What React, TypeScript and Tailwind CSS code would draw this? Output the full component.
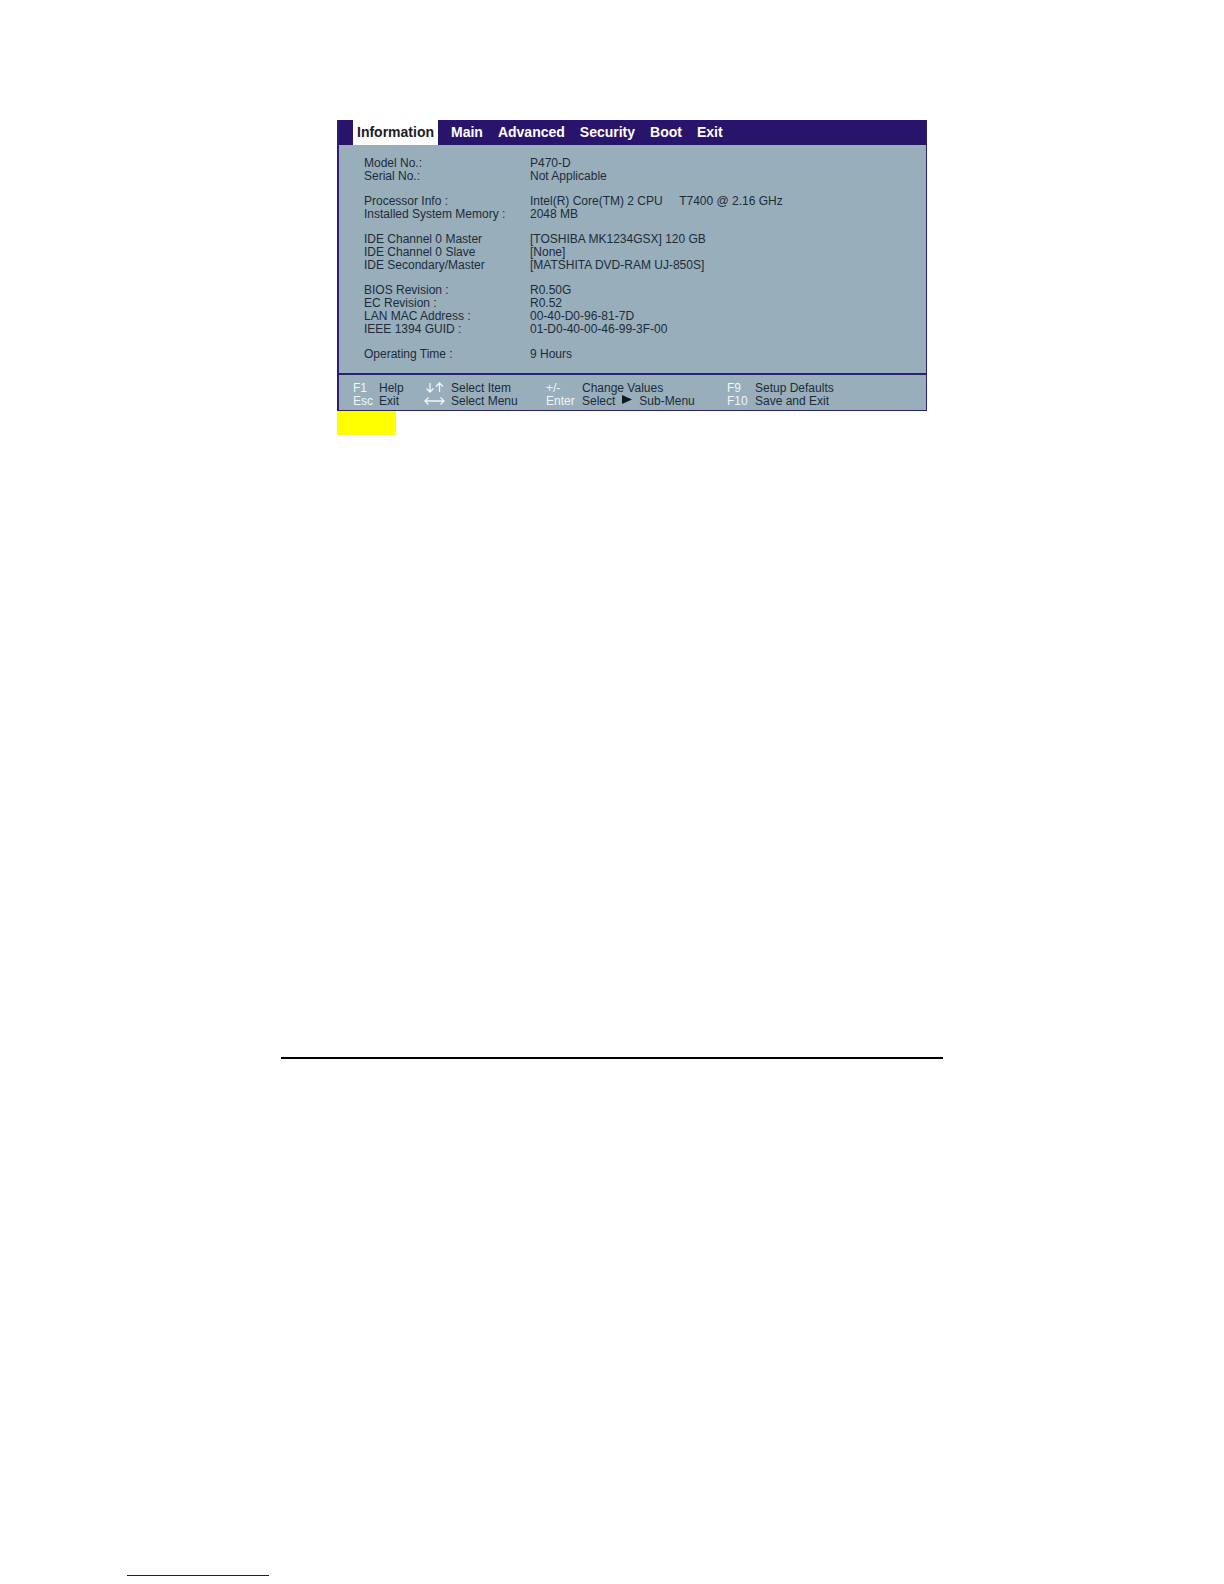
const tabs = ["Main", "Advanced", "Security", "Boot", "Exit"]

const groups = [
    [
        ["Model No.:", "P470-D"],
        ["Serial No.:", "Not Applicable"],
    ],
    [
        ["Processor Info :", "Intel(R) Core(TM) 2 CPU     T7400 @ 2.16 GHz"],
        ["Installed System Memory :", "2048 MB"],
    ],
    [
        ["IDE Channel 0 Master", "[TOSHIBA MK1234GSX] 120 GB"],
        ["IDE Channel 0 Slave", "[None]"],
        ["IDE Secondary/Master", "[MATSHITA DVD-RAM UJ-850S]"],
    ],
    [
        ["BIOS Revision :", "R0.50G"],
        ["EC Revision :", "R0.52"],
        ["LAN MAC Address :", "00-40-D0-96-81-7D"],
        ["IEEE 1394 GUID :", "01-D0-40-00-46-99-3F-00"],
    ],
    [["Operating Time :", "9 Hours"]],
]

function UpDownIcon() {
    return (
        <svg width="21" height="13" viewBox="0 0 21 13" fill="none" stroke="currentColor" strokeWidth="1.3">
            <path d="M6 1v9M2.500 6.500 6 10l3.500-3.500M15.500 10V1M12 4.500 15.500 1 19 4.500" />
        </svg>
    )
}

function LeftRightIcon() {
    return (
        <svg width="21" height="13" viewBox="0 0 21 13" fill="none" stroke="currentColor" strokeWidth="1.3">
            <path d="M1 6h19M4.500 2.500 1 6l3.500 3.500M16.500 2.500 20 6l-3.500 3.500" />
        </svg>
    )
}

function Tabs() {
    return (
        <nav className="flex h-[25px] items-stretch bg-[#29146b] pl-[14px] text-sm font-bold text-white">
            <button className="bg-white px-1 pb-0.5 text-[#1c1c24]">Information</button>
            <div className="flex gap-[15px] pl-[13px]">
                {tabs.map((tab) => (
                    <button key={tab} className="pb-0.5">{tab}</button>
                ))}
            </div>
        </nav>
    )
}

function Info() {
    return (
        <table className="my-3 ml-[25px] text-left">
            {groups.map((rows, i) => (
                <tbody key={i}>
                    {i > 0 && (
                        <tr aria-hidden="true">
                            <td colSpan={2} className="h-3 p-0"></td>
                        </tr>
                    )}
                    {rows.map(([label, value]) => (
                        <tr key={label}>
                            <th scope="row" className="w-[166px] p-0 font-normal">{label}</th>
                            <td className="p-0 whitespace-pre">{value}</td>
                        </tr>
                    ))}
                </tbody>
            ))}
        </table>
    )
}

function Keys() {
    return (
        <div className="grid grid-cols-[26px_45px_27px_95px_36px_145px_28px_1fr] border-t-2 border-[#29206f] pt-[7px] pb-[2px] pl-[14px] whitespace-nowrap">
            <span className="text-[#f0f6fa]">F1</span>
            <span>Help</span>
            <span className="text-[#f0f6fa]"><UpDownIcon /></span>
            <span>Select Item</span>
            <span className="text-[#f0f6fa]">+/-</span>
            <span>Change Values</span>
            <span className="text-[#f0f6fa]">F9</span>
            <span>Setup Defaults</span>

            <span className="text-[#f0f6fa]">Esc</span>
            <span>Exit</span>
            <span className="text-[#f0f6fa]"><LeftRightIcon /></span>
            <span>Select Menu</span>
            <span className="text-[#f0f6fa]">Enter</span>
            <span className="flex">
                Select
                <svg width="10" height="13" viewBox="0 0 10 13" className="mx-[7px]" fill="#101820">
                    <path d="M0 0 10 4.500 0 9z" />
                </svg>
                Sub-Menu
            </span>
            <span className="text-[#f0f6fa]">F10</span>
            <span>Save and Exit</span>
        </div>
    )
}

export default function App() {
    return (
        <div className="min-h-screen bg-white pt-[120px] font-['Liberation_Sans',Arial,sans-serif]">
            <main className="mx-auto w-full max-w-[662px] border-b-2 border-black pb-[622px]">
                <div className="pr-4 pl-14">
                    <section className="border-r border-b border-l-2 border-[#29206f] bg-[#98aebb] text-xs leading-[13px] text-[#1b2c3a]">
                        <Tabs />
                        <Info />
                        <Keys />
                    </section>
                    <div className="h-6 w-[59px] bg-[#ffff00]"></div>
                </div>
            </main>
            <footer className="pt-[516px] pb-[9px] pl-[127px]">
                <div className="w-[142px] border-b border-[#15157a]"></div>
            </footer>
        </div>
    )
}
